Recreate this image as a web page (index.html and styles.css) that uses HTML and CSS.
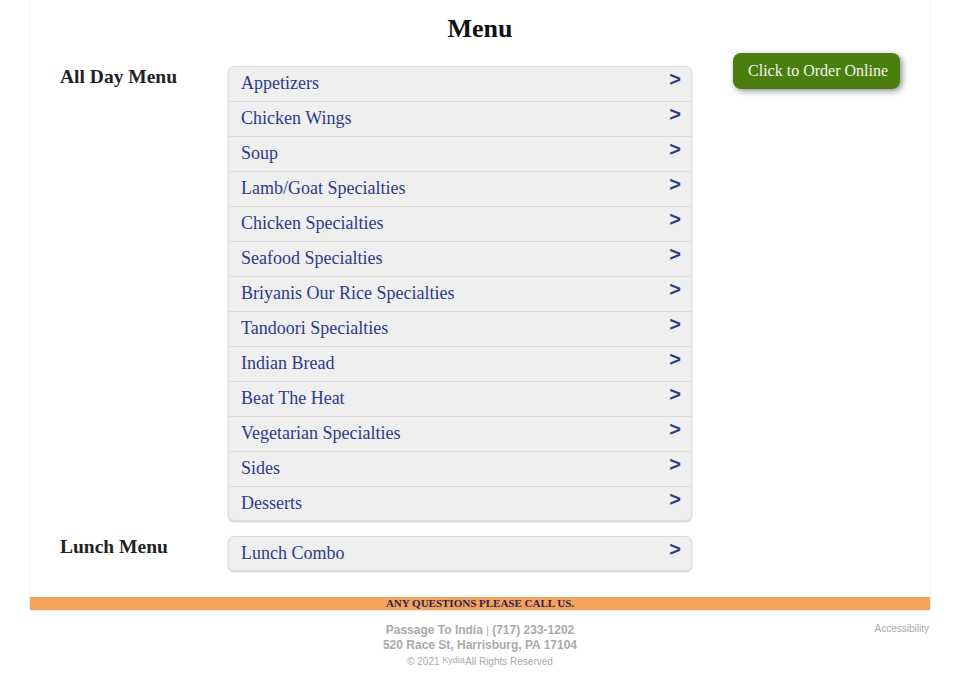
FILE: index.html
```html
<!DOCTYPE html>
<html>
<head>
<meta charset="utf-8">
<link rel="stylesheet" href="styles.css">
</head>
<body>
<div class="page">
  <h1 class="title">Menu</h1>
  <div class="content">
    <div class="menus">
      <section class="menu-section">
        <h2 class="menu-label">All Day Menu</h2>
        <ul class="cat-list">
          <li class="cat"><span class="cat-name">Appetizers</span><span class="arrow">&gt;</span></li>
          <li class="cat"><span class="cat-name">Chicken Wings</span><span class="arrow">&gt;</span></li>
          <li class="cat"><span class="cat-name">Soup</span><span class="arrow">&gt;</span></li>
          <li class="cat"><span class="cat-name">Lamb/Goat Specialties</span><span class="arrow">&gt;</span></li>
          <li class="cat"><span class="cat-name">Chicken Specialties</span><span class="arrow">&gt;</span></li>
          <li class="cat"><span class="cat-name">Seafood Specialties</span><span class="arrow">&gt;</span></li>
          <li class="cat"><span class="cat-name">Briyanis Our Rice Specialties</span><span class="arrow">&gt;</span></li>
          <li class="cat"><span class="cat-name">Tandoori Specialties</span><span class="arrow">&gt;</span></li>
          <li class="cat"><span class="cat-name">Indian Bread</span><span class="arrow">&gt;</span></li>
          <li class="cat"><span class="cat-name">Beat The Heat</span><span class="arrow">&gt;</span></li>
          <li class="cat"><span class="cat-name">Vegetarian Specialties</span><span class="arrow">&gt;</span></li>
          <li class="cat"><span class="cat-name">Sides</span><span class="arrow">&gt;</span></li>
          <li class="cat"><span class="cat-name">Desserts</span><span class="arrow">&gt;</span></li>
        </ul>
      </section>
      <section class="menu-section">
        <h2 class="menu-label">Lunch Menu</h2>
        <ul class="cat-list">
          <li class="cat"><span class="cat-name">Lunch Combo</span><span class="arrow">&gt;</span></li>
        </ul>
      </section>
    </div>
    <div class="order-col">
      <a class="order-btn">Click to Order Online</a>
    </div>
  </div>
  <div class="call-bar">ANY QUESTIONS PLEASE CALL US.</div>
</div>
<footer class="footer">
  <div class="footer-spacer"></div>
  <div class="footer-info">
    <div class="info-line"><b>Passage To India</b> <span class="sep">|</span> <b>(717) 233-1202</b></div>
    <div class="info-line"><b>520 Race St, Harrisburg, PA 17104</b></div>
    <div class="copy">© 2021 <span class="kydia">Kydia</span> All Rights Reserved</div>
  </div>
  <div class="footer-right"><a class="access">Accessibility</a></div>
</footer>
</body>
</html>
```

FILE: styles.css
```css
html, body {
  margin: 0;
  padding: 0;
  background: #ffffff;
}

.page {
  width: 902px;
  box-sizing: border-box;
  margin: 0 auto;
  padding-top: 14px;
  border: 1px solid #f0f0f0;
  border-top: none;
  font-family: "Liberation Serif", "Times New Roman", serif;
}

.title {
  margin: 0;
  font-size: 26px;
  line-height: 30px;
  font-weight: bold;
  color: #111;
  text-align: center;
}

.content {
  display: flex;
  padding: 9px 30px 0;
}

.menus {
  padding-top: 13px;
  display: flex;
  flex-direction: column;
  gap: 15px;
}

.menu-section {
  display: flex;
}

.menu-label {
  width: 168px;
  margin: 0;
  font-size: 19.5px;
  line-height: 22px;
  font-weight: bold;
  color: #222;
}

.cat-list {
  list-style: none;
  margin: 0;
  padding: 0;
  width: 464px;
  box-sizing: border-box;
  border: 1px solid #dddddd;
  border-radius: 6px;
  background: #efefef;
  box-shadow: 0 1px 2px rgba(0, 0, 0, 0.22);
  overflow: hidden;
}

.cat {
  display: flex;
  justify-content: space-between;
  height: 34px;
  padding: 0 10px 0 12px;
  border-bottom: 1px solid #dcdcdc;
}

.cat:last-child {
  height: 33px;
  border-bottom: none;
}

.cat-name {
  font-size: 18px;
  line-height: 33px;
  color: #2b3c8c;
}

.arrow {
  align-self: flex-start;
  font-family: "Liberation Sans", Arial, sans-serif;
  font-weight: bold;
  font-size: 20px;
  line-height: 24px;
  color: #2b3c8c;
}

.order-col {
  flex: 1;
  display: flex;
  justify-content: flex-end;
  align-items: flex-start;
}

.order-btn {
  display: block;
  padding: 0 12px 0 15px;
  height: 36px;
  line-height: 35px;
  font-size: 16px;
  color: #f4f4e8;
  background: #4a7f10;
  border-radius: 8px;
  box-shadow: 2px 2px 6px rgba(0, 0, 0, 0.45);
}

.call-bar {
  margin-top: 26px;
  background: #f4a35e;
  color: #2e1f4f;
  font-size: 11px;
  line-height: 13px;
  font-weight: bold;
  text-align: center;
}

.footer {
  width: 902px;
  margin: 0 auto;
  display: grid;
  grid-template-columns: 1fr auto 1fr;
  padding-top: 12px;
  font-family: "Liberation Sans", Arial, sans-serif;
  color: #aaaaaa;
}

.footer-info {
  text-align: center;
}

.info-line {
  font-size: 12px;
  line-height: 14px;
}

.info-line b {
  font-weight: bold;
}

.sep {
  font-size: 10px;
}

.copy {
  font-size: 10px;
  line-height: 14px;
  margin-top: 1px;
}

.kydia {
  font-size: 9px;
  vertical-align: 2px;
  margin-right: -2px;
}

.footer-right {
  text-align: right;
  padding-right: 2px;
  font-size: 10px;
  line-height: 12px;
}

.access {
  font-size: 10px;
  line-height: 12px;
  color: #aaaaaa;
}
```
